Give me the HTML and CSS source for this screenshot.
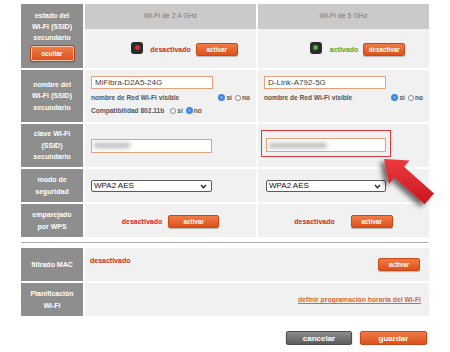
FILE: index.html
```html
<!DOCTYPE html>
<html lang="es">
  <head>
    <meta charset="utf-8">
    <title>Wi-Fi secundario</title>
    <link rel="stylesheet" href="styles.css">
  </head>
  <body>
    <div class="page">

      <div class="grid top">
        <!-- estado -->
        <div class="lbl lbl-estado">
          <span>estado del<br>Wi-Fi (SSID)<br>secundario</span>
          <button class="btn btn-ocultar">ocultar</button>
        </div>
        <div class="band">
          <div class="band-head">Wi-Fi de 2.4 GHz</div>
          <div class="band-state">
            <span class="led"><i class="dot red"></i></span>
            <span class="st off">desactivado</span>
            <button class="btn">activar</button>
          </div>
        </div>
        <div class="band">
          <div class="band-head">Wi-Fi de 5 GHz</div>
          <div class="band-state">
            <span class="led led-on"><i class="dot green"></i></span>
            <span class="st on">activado</span>
            <button class="btn">desactivar</button>
          </div>
        </div>

        <!-- nombre -->
        <div class="lbl"><span>nombre del<br>Wi-Fi (SSID)<br>secundario</span></div>
        <div class="cell cell-name">
          <div class="field">MiFibra-D2A5-24G</div>
          <div class="opt">
            <span>nombre de Red Wi-Fi visible</span>
            <span class="radios"><i class="radio checked"></i>sí<i class="radio"></i>no</span>
          </div>
          <div class="opt opt-left">
            <span>Compatibilidad 802.11b</span>
            <span class="radios"><i class="radio"></i>sí<i class="radio checked"></i>no</span>
          </div>
        </div>
        <div class="cell cell-name">
          <div class="field">D-Link-A792-5G</div>
          <div class="opt">
            <span>nombre de Red Wi-Fi visible</span>
            <span class="radios"><i class="radio checked"></i>sí<i class="radio"></i>no</span>
          </div>
        </div>

        <!-- clave -->
        <div class="lbl"><span>clave Wi-Fi<br>(SSID)<br>secundario</span></div>
        <div class="cell cell-center">
          <div class="field field-pass"><span class="blur"></span></div>
        </div>
        <div class="cell cell-mark">
          <div class="mark">
            <div class="field field-pass field-narrow"><span class="blur blur-long"></span></div>
          </div>
        </div>

        <!-- modo -->
        <div class="lbl"><span>modo de<br>seguridad</span></div>
        <div class="cell cell-center">
          <div class="select">WPA2 AES
            <svg class="chev" viewBox="0 0 8 6" width="7" height="5"><path d="M1 1.2 L4 4.4 L7 1.2" fill="none" stroke="#222" stroke-width="1.6"/></svg>
          </div>
        </div>
        <div class="cell cell-center cell-sel2">
          <div class="select select-narrow">WPA2 AES
            <svg class="chev" viewBox="0 0 8 6" width="7" height="5"><path d="M1 1.2 L4 4.4 L7 1.2" fill="none" stroke="#222" stroke-width="1.6"/></svg>
          </div>
        </div>

        <!-- WPS -->
        <div class="lbl"><span>emparejado<br>por WPS</span></div>
        <div class="cell cell-wps">
          <span class="st off">desactivado</span>
          <button class="btn btn-wide">activar</button>
        </div>
        <div class="cell cell-wps cell-wps2">
          <span class="st off">desactivado</span>
          <button class="btn">activar</button>
        </div>
      </div>

      <hr class="sep">

      <div class="grid bottom">
        <div class="lbl"><span>filtrado MAC</span></div>
        <div class="cell cell-mac">
          <span class="st off">desactivado</span>
          <button class="btn">activar</button>
        </div>
        <div class="lbl"><span>Planificación<br>Wi-Fi</span></div>
        <div class="cell cell-plan">
          <a class="link" href="#">definir programación horaria del Wi-Fi</a>
        </div>
      </div>

      <div class="actions">
        <button class="big big-gray">cancelar</button>
        <button class="big big-orange">guardar</button>
      </div>

      <!-- flecha roja -->
      <svg class="arrow" viewBox="366 148 76 66" width="76" height="66">
        <defs>
          <linearGradient id="ar" x1="0" y1="0" x2="0" y2="1">
            <stop offset="0" stop-color="#ec3a3e"/>
            <stop offset="1" stop-color="#c9171d"/>
          </linearGradient>
          <filter id="sh" x="-40%" y="-40%" width="180%" height="180%">
            <feDropShadow dx="-4" dy="3" stdDeviation="2.6" flood-color="#000" flood-opacity="0.55"/>
          </filter>
        </defs>
        <polygon filter="url(#sh)" fill="url(#ar)"
          points="384,159 409.5,160.5 404,166.8 434,193.5 424.5,204.2 394.5,177.6 389,184"/>
      </svg>
    </div>
  </body>
</html>
```

FILE: styles.css
```css
body {
    margin: 0;
    background: #ffffff;
    font-family: "Liberation Sans", Arial, sans-serif;
}

.page {
    position: relative;
    width: 408px;
    margin: 4px 0 0 21px;
}

.grid {
    display: grid;
    gap: 2px;
}

.top {
    grid-template-columns: 62px 171px 171px;
    grid-template-rows: 64px 52px 43px 33px 33px;
}

.bottom {
    grid-template-columns: 62px 344px;
    grid-template-rows: 33px 33px;
}

/* colonne des libellés */
.lbl {
    background: #8e8e8e;
    color: #ffffff;
    font-size: 7px;
    font-weight: bold;
    line-height: 11.5px;
    text-align: center;
    display: flex;
    flex-direction: column;
    align-items: center;
    justify-content: center;
}

.lbl-estado {
    justify-content: flex-start;
    padding-top: 6px;
    line-height: 11px;
}

/* boutons orange */
.btn {
    width: 42px;
    height: 13px;
    padding: 0;
    border: 1px solid #c44a18;
    border-radius: 2px;
    background: linear-gradient(#f27a44, #dc521d);
    color: #ffffff;
    font-family: "Liberation Sans", Arial, sans-serif;
    font-size: 6.3px;
    font-weight: bold;
    box-shadow: 0 1px 1px rgba(0, 0, 0, 0.25);
}

.btn-wide {
    width: 51px;
}

.btn-ocultar {
    width: 43px;
    height: 15px;
    margin-top: 3px;
    border: 1px solid #f6c6ae;
    box-shadow: 0 0 0 1px #b84514, 0 1px 2px rgba(0, 0, 0, 0.3);
}

/* colonnes des bandes */
.band {
    display: flex;
    flex-direction: column;
    background: #f1f1f1;
}

.band-head {
    height: 25px;
    background: #cacaca;
    color: #777777;
    font-size: 7px;
    line-height: 23px;
    text-align: center;
}

.band-state {
    flex: 1;
    display: flex;
    align-items: center;
    justify-content: center;
    padding-left: 28px;
    padding-top: 1px;
}

.led {
    width: 12px;
    height: 12px;
    border-radius: 3px;
    background: #2b2b2b;
    display: flex;
    align-items: center;
    justify-content: center;
    margin-right: 7px;
    margin-top: -3px;
}

.led-on {
    margin-right: 8px;
}

.dot {
    width: 5px;
    height: 5px;
    border-radius: 50%;
}

.dot.red {
    background: #e8262c;
}

.dot.green {
    background: #48b83a;
}

.st {
    font-size: 7px;
    font-weight: bold;
    margin-right: 5px;
}

.st.off {
    color: #d2262d;
}

.st.on {
    color: #4fa52e;
}

/* cellules */
.cell {
    background: #f1f1f1;
}

.cell-name {
    padding: 6px 6px 0 6px;
}

.field {
    width: 122px;
    height: 13px;
    box-sizing: border-box;
    border: 1px solid #e6a17c;
    background: #ffffff;
    color: #444444;
    font-size: 8px;
    line-height: 11px;
    padding-left: 3px;
    margin-bottom: 2px;
}

.opt {
    display: flex;
    justify-content: space-between;
    align-items: center;
    height: 13px;
    color: #555555;
    font-size: 6.6px;
    font-weight: bold;
}

.opt-left {
    justify-content: flex-start;
}

.opt-left .radios {
    margin-left: 3px;
}

.radios {
    display: flex;
    align-items: center;
}

.radio {
    width: 6px;
    height: 6px;
    box-sizing: border-box;
    border: 1px solid #8a8a8a;
    border-radius: 50%;
    background: #ffffff;
    margin: 0 1px 0 3px;
}

.radio.checked {
    width: 7px;
    height: 7px;
    border: 2px solid #3d83e8;
    background: #ffffff;
    box-shadow: inset 0 0 0 1px #3d83e8;
}

.cell-center {
    display: flex;
    align-items: center;
    padding-left: 6px;
}

.field-pass {
    width: 121px;
    height: 14px;
    margin: 0;
    display: flex;
    align-items: center;
    padding-left: 2px;
}

.field-narrow {
    width: 120px;
}

.blur {
    display: block;
    width: 36px;
    height: 5px;
    background: #b9b9b9;
    filter: blur(2px);
}

.blur-long {
    width: 58px;
}

.cell-mark {
    padding: 6px 0 0 3px;
}

.mark {
    width: 130px;
    height: 27px;
    box-sizing: border-box;
    border: 1px solid #dc3a3a;
    padding: 7px 4px 0 4px;
}

.select {
    position: relative;
    width: 121px;
    height: 12px;
    box-sizing: border-box;
    border: 1px solid #5a5a5a;
    border-radius: 2px;
    background: #ffffff;
    color: #111111;
    font-size: 8px;
    line-height: 10px;
    padding-left: 2px;
    margin-top: 1px;
}

.select-narrow {
    width: 120px;
}

.cell-sel2 {
    padding-left: 8px;
}

.chev {
    position: absolute;
    right: 4px;
    top: 3px;
}

.cell-wps {
    display: flex;
    align-items: center;
    justify-content: center;
    padding-top: 2px;
}

.cell-wps .st {
    margin-right: 6px;
}

.cell-wps2 .st {
    margin-right: 16px;
}

/* séparateur */
.sep {
    border: 0;
    border-top: 1px solid #a9a9a9;
    margin: 5px 0;
    width: 407px;
}

.cell-mac {
    display: flex;
    justify-content: space-between;
    align-items: flex-start;
    padding: 8px 9px 0 5px;
}

.cell-mac .st {
    line-height: 10px;
}

.cell-mac .btn {
    margin-top: 2px;
}

.cell-plan {
    display: flex;
    align-items: center;
    justify-content: flex-end;
    padding-right: 8px;
}

.link {
    color: #d46a34;
    font-size: 6.8px;
    font-weight: bold;
    text-decoration: underline;
}

/* boutons du bas */
.actions {
    display: flex;
    justify-content: flex-end;
    gap: 8px;
    margin-top: 15px;
    padding-right: 2px;
}

.big {
    width: 66px;
    height: 14px;
    padding: 0;
    border-radius: 2px;
    color: #ffffff;
    font-family: "Liberation Sans", Arial, sans-serif;
    font-size: 8px;
    font-weight: bold;
    box-shadow: 0 1px 2px rgba(0, 0, 0, 0.3);
}

.big-gray {
    border: 1px solid #4c4c4c;
    background: linear-gradient(#8d8d8d, #5b5b5b);
}

.big-orange {
    width: 67px;
    border: 1px solid #c44a18;
    background: linear-gradient(#f27a44, #dc521d);
}

.arrow {
    position: absolute;
    left: 345px;
    top: 144px;
}
```
